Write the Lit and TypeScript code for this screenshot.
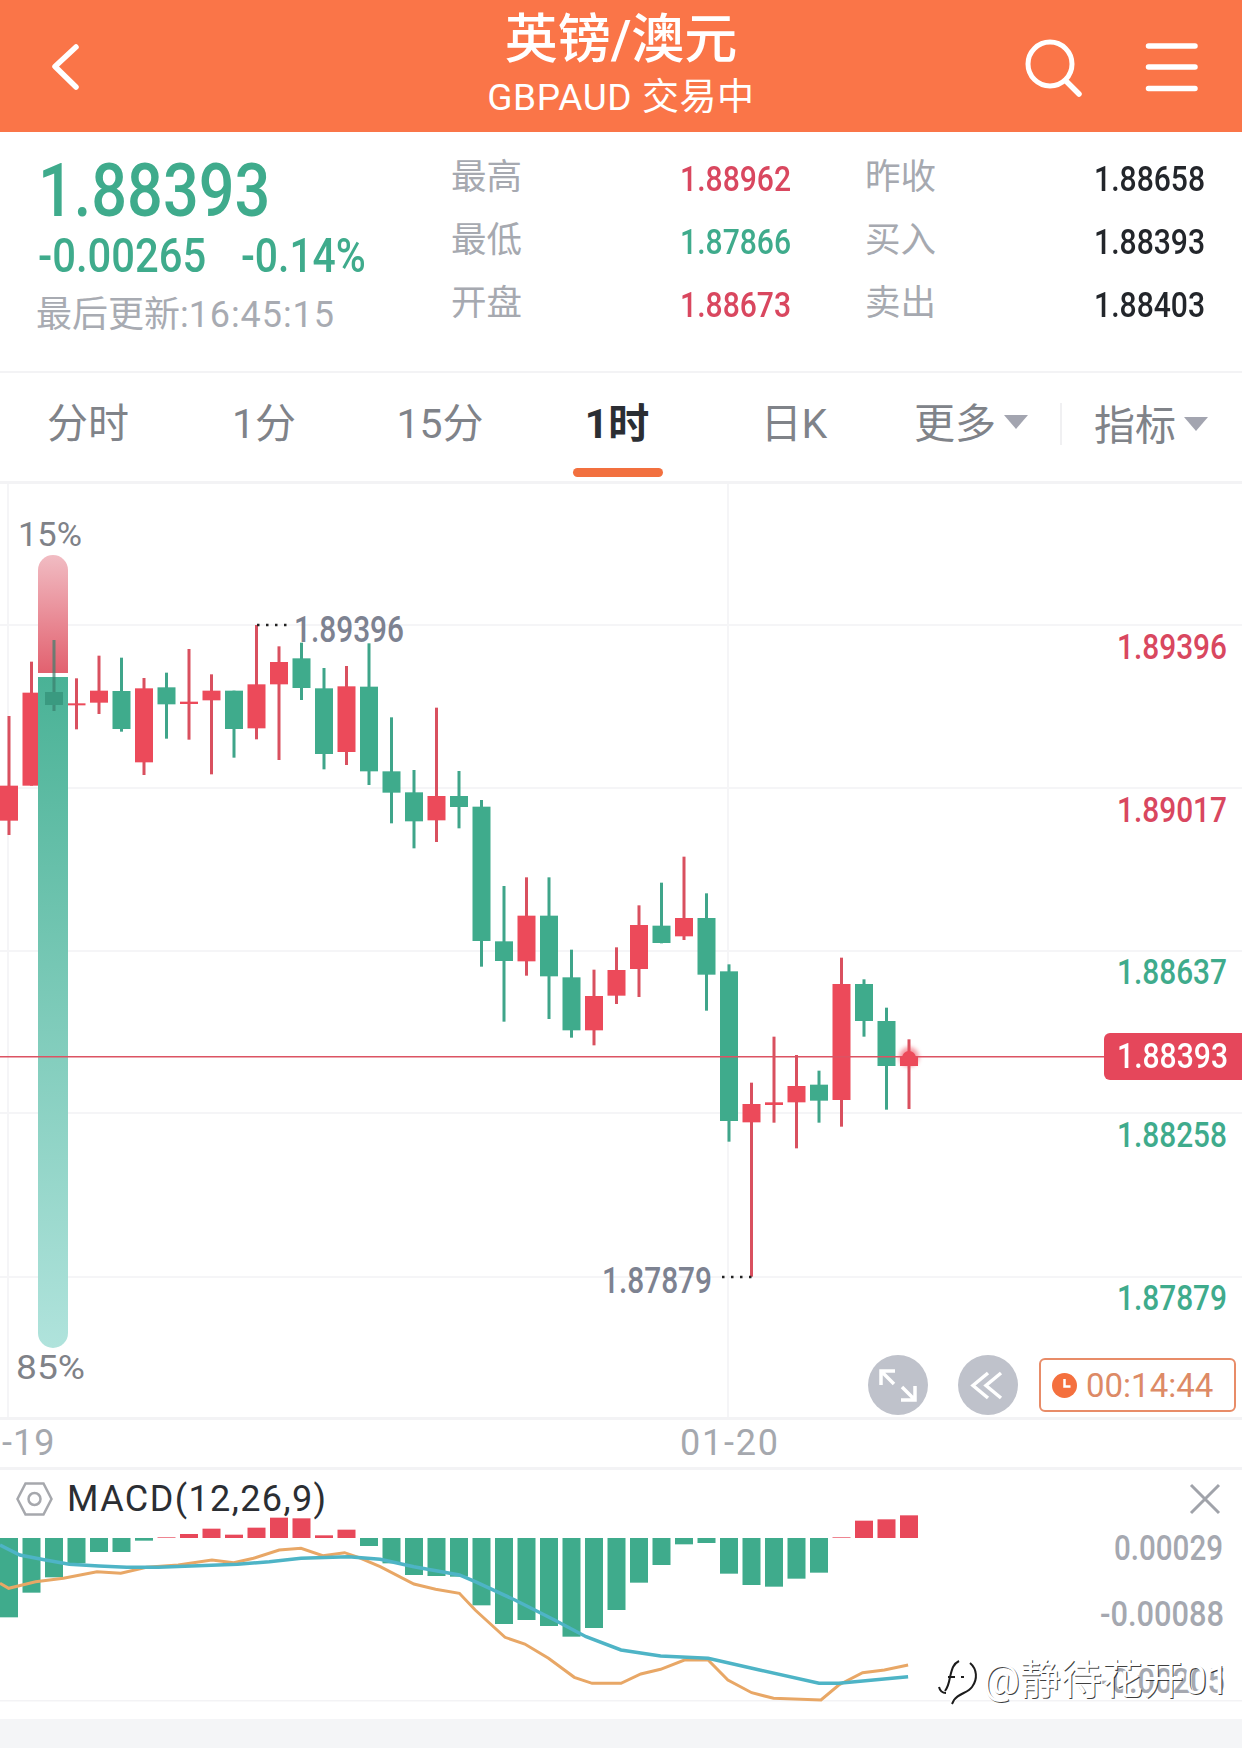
import { LitElement, html, svg, css } from "lit";
import { customElement } from "lit/decorators.js";

const G = "#3fab8c";
const R = "#ec4a5a";
const RW = "#d9505f";
const GW = "#3fa58a";

// [wickTop, wickBottom, bodyTop, bodyBottom, up] — y in 3x crop units
type C = [number, number, number, number, number];
const A: C[] = [
  [648, 1005, 857, 962, 1], [485, 857, 578, 857, 1], [422, 635, 577, 615, 0], [535, 688, 610, 616, 1],
  [467, 642, 572, 608, 1], [473, 695, 573, 687, 0], [534, 825, 565, 787, 1], [518, 716, 562, 613, 0],
  [447, 719, 605, 612, 1], [523, 823, 572, 601, 1], [572, 773, 572, 687, 0], [375, 718, 553, 685, 1],
  [439, 780, 486, 553, 1], [428, 600, 475, 564, 0], [504, 808, 565, 762, 0], [498, 795, 559, 756, 1],
  [430, 855, 560, 814, 0], [652, 970, 814, 878, 0], [810, 1045, 877, 964, 0], [623, 1026, 888, 961, 1],
  [813, 985, 888, 921, 0],
];
const B: C[] = [
  [60, 560, 80, 483, 0], [318, 725, 484, 543, 0], [292, 587, 407, 544, 1], [292, 717, 407, 589, 0],
  [509, 773, 592, 751, 0], [569, 796, 648, 751, 1], [502, 672, 570, 647, 1], [376, 651, 435, 567, 1],
  [308, 490, 437, 489, 0], [230, 480, 414, 469, 1], [340, 692, 414, 584, 0], [553, 1085, 574, 1023, 0],
  [908, 1490, 972, 1027, 1], [770, 1028, 967, 975, 1], [825, 1105, 918, 967, 1], [872, 1028, 914, 962, 0],
  [533, 1040, 612, 960, 1], [598, 770, 612, 723, 0], [683, 989, 723, 858, 0], [778, 987, 830, 858, 1],
];
const candles = [
  ...A.map((c) => c.slice(0, 4).map((v) => 500 + v / 3).concat(c[4])),
  ...B.map((c) => c.slice(0, 4).map((v) => 780 + v / 3).concat(c[4])),
];
const cx = (i: number) => 9 + i * 22.5;

// histogram ends, y in crop units (baseline 715)
const hist = [952, 878, 832, 790, 756, 756, 722, 712, 702, 686, 704, 683, 653, 655, 706, 689, 738, 790, 825, 828, 830, 916, 972, 960, 978, 1010, 984, 930, 848, 795, 733, 729, 821, 855, 860, 836, 818, 712, 662, 658, 646];

const orangeL = [[0,850],[22,865],[90,845],[160,835],[245,815],[305,820],[370,802],[450,795],[535,780],[590,788],[640,775],[705,750],[760,745],[815,767],[870,758],[905,772],[960,800],[1045,852],[1100,868],[1160,880],[1200,930],[1275,1012],[1325,1032],[1385,1075],[1450,1132],[1495,1150],[1568,1150]];
const orangeR = [[50,1122],[100,1108],[160,1080],[220,1080],[270,1140],[330,1178],[385,1195],[505,1200],[550,1155],[610,1118],[665,1110],[725,1095]];
const blueL = [[0,735],[50,765],[115,780],[175,793],[250,798],[320,802],[400,802],[500,797],[600,793],[680,785],[760,775],[880,770],[960,778],[1045,800],[1160,825],[1200,845],[1300,900],[1400,960],[1480,1010],[1568,1050]];
const blueR = [[100,1068],[220,1075],[350,1110],[500,1150],[550,1150],[725,1130]];
const toPts = (l: number[][], r: number[][]) =>
  [...l.map(([x, y]) => [x / 2.525, 1300 + y / 3]), ...r.map(([x, y]) => [621 + x / 2.525, 1300 + y / 3])]
    .map(([x, y]) => `${x.toFixed(1)},${y.toFixed(1)}`)
    .join(" ");

@customElement("app-root")
export class AppRoot extends LitElement {
  static styles = css`
    :host {
      display: block;
      width: 1242px;
      height: 1748px;
      background: #fff;
      overflow: hidden;
      font-family: Roboto, "Noto Sans CJK SC", sans-serif;
    }
    .header {
      height: 132px;
      background: #fa7548;
      color: #fff;
      display: flex;
      align-items: stretch;
    }
    .header svg { display: block; }
    .h-left, .h-right { width: 300px; flex: none; }
    .h-title {
      flex: 1;
      display: flex;
      flex-direction: column;
      align-items: center;
      padding-top: 9px;
    }
    .t1 { font-size: 53px; line-height: 62px; font-weight: 500; white-space: nowrap; }
    .t2 { font-size: 37px; line-height: 42px; margin-top: 6px; letter-spacing: 0.6px; white-space: nowrap; }
    .quote {
      height: 241px;
      box-sizing: border-box;
      display: flex;
      border-bottom: 2px solid #f3f3f5;
    }
    .q-left { width: 451px; flex: none; padding: 25px 0 0 38px; box-sizing: border-box; }
    .price {
      font-size: 75px;
      line-height: 66px;
      height: 66px;
      font-weight: 500;
      color: #3fab8c;
      transform: scaleX(0.84);
      transform-origin: left;
    }
    .chg { display: flex; color: #3fab8c; font-size: 48px; line-height: 66px; font-weight: 500; height: 66px; }
    .chg span { display: block; flex: none; transform: scaleX(0.87); transform-origin: left; }
    .chg span:first-child { width: 203px; }
    .chg span:last-child { transform: scaleX(0.85); }
    .upd { font-size: 36px; line-height: 50px; color: #a8abb2; white-space: nowrap; margin: 1px 0 0 -2px; }
    .upd b { font-weight: 400; letter-spacing: 0.9px; }
    .q-grid {
      flex: none;
      padding-top: 15px;
      display: grid;
      grid-template-columns: 100px 240px 175px 276px;
      grid-auto-rows: 63px;
      align-items: center;
    }
    .lab { font-size: 35.5px; line-height: 40px; color: #a6a9b0; padding-bottom: 4px; white-space: nowrap; }
    .lab.second { margin-left: 74px; }
    .val { font-size: 35px; line-height: 40px; text-align: right; font-weight: 500; padding-top: 3px; }
    .val span { display: inline-block; transform: scaleX(0.86); transform-origin: right; }
    .val.last { padding-right: 37px; color: #23262b; }
    .red { color: #d9475f; }
    .green { color: #3fab8c; }
    .tabs {
      height: 111px;
      box-sizing: border-box;
      display: flex;
      border-bottom: 3px solid #f3f3f5;
    }
    .tab {
      position: relative;
      display: flex;
      align-items: center;
      justify-content: center;
      font-size: 41px;
      color: #808389;
      padding-bottom: 15px;
      box-sizing: border-box;
      white-space: nowrap;
      flex: none;
    }
    .tab.w176 { width: 176px; }
    .tab.w178 { width: 178px; }
    .tab.w182 { width: 182px; padding-bottom: 10px; }
    .tab.on { color: #2b2e33; font-weight: 700; }
    .tab.on::after {
      content: "";
      position: absolute;
      left: 45px;
      bottom: 4px;
      width: 90px;
      height: 9px;
      border-radius: 5px;
      background: #f2703f;
    }
    .caret {
      width: 0; height: 0;
      border-left: 12px solid transparent;
      border-right: 12px solid transparent;
      border-top: 14px solid #a3a5b0;
      margin-left: 8px;
      margin-top: 4px;
    }
    .sep { width: 2px; height: 42px; background: #f0f0f2; align-self: center; margin-top: -6px; margin-right: -2px; }
    .chart { position: relative; height: 936px; box-sizing: border-box; border-bottom: 3px solid #f3f3f5; }
    .chart svg, .macd svg { display: block; }
    .svg-t { font-family: Roboto, sans-serif; }
    .axis-lab { font-size: 34.5px; font-weight: 500; }
    .tag {
      position: absolute;
      right: 0;
      top: 549px;
      width: 138px;
      height: 47px;
      background: #e5475b;
      color: #fff;
      font-size: 35px;
      line-height: 47px;
      text-align: center;
      font-weight: 500;
      border-radius: 6px 0 0 6px;
    }
    .tag span { display: inline-block; transform: scaleX(0.86); }
    .ctrls {
      position: absolute;
      left: 868px;
      top: 871px;
      display: flex;
      align-items: center;
    }
    .round {
      width: 60px;
      height: 60px;
      border-radius: 50%;
      background: #bfc2cb;
      margin-right: 30px;
      flex: none;
    }
    .round + .round { margin-right: 21px; }
    .timer {
      width: 197px;
      height: 54px;
      box-sizing: border-box;
      border: 2px solid #e88c68;
      border-radius: 6px;
      display: flex;
      align-items: center;
      padding-left: 11px;
      gap: 9px;
      font-size: 33px;
      color: #dd8a66;
      flex: none;
    }
    .axis {
      height: 50px;
      box-sizing: border-box;
      border-bottom: 3px solid #f3f3f5;
      color: #a5a8ae;
      font-size: 36px;
      line-height: 46px;
      display: flex;
    }
    .axis .a1 { width: 680px; padding-left: 2px; box-sizing: border-box; letter-spacing: 1px; }
    .axis .a2 { letter-spacing: 1.8px; }
    .macd { position: relative; height: 249px; }
    .macd-title {
      position: absolute;
      left: 16px;
      top: 9px;
      display: flex;
      align-items: center;
      gap: 14px;
      font-size: 36px;
      line-height: 40px;
      letter-spacing: 1.4px;
      color: #2b2e33;
    }
    .foot { height: 29px; background: #f4f5f7; }
    .wm {
      position: absolute;
      left: 983px;
      top: 1652px;
      font-size: 41px;
      line-height: 56px;
      color: #fff;
      white-space: nowrap;
      text-shadow: 1px 1px 0 rgba(0, 0, 0, 0.75);
    }
    .wm-logo { position: absolute; left: 937px; top: 1655px; }
    .page { position: relative; }
  `;

  render() {
    const gridY = [625, 788, 951, 1113, 1277];
    const prices: [string, number, string][] = [
      ["1.89396", 647, "#d9475f"],
      ["1.89017", 810, "#d9475f"],
      ["1.88637", 972, "#3fab8c"],
      ["1.88258", 1135, "#3fab8c"],
      ["1.87879", 1298, "#3fab8c"],
    ];
    return html`
      <div class="page">
        <div class="header">
          <div class="h-left">
            <svg width="300" height="132"><path d="M76 47 L55 66.5 L76 87" fill="none" stroke="#fff" stroke-width="5.5" stroke-linecap="round" stroke-linejoin="round"/></svg>
          </div>
          <div class="h-title">
            <div class="t1">英镑/澳元</div>
            <div class="t2">GBPAUD 交易中</div>
          </div>
          <div class="h-right">
            <svg width="300" height="132" viewBox="942 0 300 132">
              <circle cx="1050" cy="64" r="22" fill="none" stroke="#fff" stroke-width="5"/>
              <path d="M1066 81 L1079 94" stroke="#fff" stroke-width="5.5" stroke-linecap="round"/>
              <path d="M1148.5 46 H1195 M1148.5 67 H1195 M1148.5 88.5 H1195" stroke="#fff" stroke-width="5.5" stroke-linecap="round"/>
            </svg>
          </div>
        </div>

        <div class="quote">
          <div class="q-left">
            <div class="price">1.88393</div>
            <div class="chg"><span>-0.00265</span><span>-0.14%</span></div>
            <div class="upd">最后更新:<b>16:45:15</b></div>
          </div>
          <div class="q-grid">
            <div class="lab">最高</div><div class="val red"><span>1.88962</span></div>
            <div class="lab second">昨收</div><div class="val last"><span>1.88658</span></div>
            <div class="lab">最低</div><div class="val green"><span>1.87866</span></div>
            <div class="lab second">买入</div><div class="val last"><span>1.88393</span></div>
            <div class="lab">开盘</div><div class="val red"><span>1.88673</span></div>
            <div class="lab second">卖出</div><div class="val last"><span>1.88403</span></div>
          </div>
        </div>

        <div class="tabs">
          <div class="tab w176">分时</div>
          <div class="tab w176">1分</div>
          <div class="tab w176">15分</div>
          <div class="tab w178 on">1时</div>
          <div class="tab w176">日K</div>
          <div class="tab w178">更多<span class="caret"></span></div>
          <div class="sep"></div>
          <div class="tab w182">指标<span class="caret"></span></div>
        </div>

        <div class="chart">
          <svg width="1242" height="933" viewBox="0 484 1242 933">
            <defs>
              <linearGradient id="gr" x1="0" y1="0" x2="0" y2="1"><stop offset="0" stop-color="#f1bcc3"/><stop offset="1" stop-color="#e2616f"/></linearGradient>
              <linearGradient id="gg" x1="0" y1="0" x2="0" y2="1"><stop offset="0" stop-color="#4ab296"/><stop offset="1" stop-color="#b0e3dc"/></linearGradient>
              <filter id="glow" x="-60%" y="-60%" width="220%" height="220%"><feGaussianBlur stdDeviation="2"/></filter>
            </defs>
            ${gridY.map((y) => svg`<rect x="0" y="${y - 1}" width="1242" height="2" fill="#f5f5f7"/>`)}
            <rect x="7" y="484" width="2" height="933" fill="#f5f5f7"/>
            <rect x="727" y="484" width="2" height="933" fill="#f5f5f7"/>
            ${candles.map((c, i) => {
              const x = cx(i);
              const up = c[4] === 1;
              if (i === 2) return svg``;
              return svg`
                <rect x="${x - 1.5}" y="${c[0]}" width="3" height="${c[1] - c[0]}" fill="${up ? RW : GW}"/>
                <rect x="${x - 9}" y="${c[2]}" width="18" height="${Math.max(c[3] - c[2], 2)}" fill="${up ? R : G}"/>`;
            })}
            <path d="M38 673 V570 a15 15 0 0 1 30 0 V673 Z" fill="url(#gr)"/>
            <path d="M38 677 H68 V1333 a15 15 0 0 1 -30 0 Z" fill="url(#gg)"/>
            <rect x="52.5" y="640" width="3" height="71" fill="#3a7f6c" opacity="0.7"/>
            <rect x="45" y="692" width="18" height="13" fill="#3a9a80"/>
            <text class="svg-t" x="18" y="546" font-size="33" fill="#7f8288" textLength="64" lengthAdjust="spacingAndGlyphs">15%</text>
            <text class="svg-t" x="16" y="1379" font-size="33" fill="#7f8288" textLength="69" lengthAdjust="spacingAndGlyphs">85%</text>
            <path d="M257 625 H287" stroke="#222" stroke-width="2.5" stroke-dasharray="2.5 6.5"/>
            <text class="svg-t" x="294" y="642" font-size="36" font-weight="500" fill="#7d8291" textLength="110" lengthAdjust="spacingAndGlyphs">1.89396</text>
            <path d="M722 1277 H752" stroke="#222" stroke-width="2.5" stroke-dasharray="2.5 6.5"/>
            <text class="svg-t" x="602" y="1293" font-size="36" font-weight="500" fill="#7d8291" textLength="110" lengthAdjust="spacingAndGlyphs">1.87879</text>
            <rect x="0" y="1056" width="1104" height="1.5" fill="#dc5363"/>
            <circle cx="909" cy="1057" r="10" fill="#ec4a5a" opacity="0.55" filter="url(#glow)"/>
            <circle cx="909" cy="1058" r="7" fill="#ec4a5a"/>
            ${prices.map(([t, y, c]) => svg`<text class="svg-t axis-lab" x="1117" y="${y + 12}" fill="${c}" textLength="110" lengthAdjust="spacingAndGlyphs">${t}</text>`)}
          </svg>
          <div class="tag"><span>1.88393</span></div>
          <div class="ctrls">
            <div class="round">
              <svg width="60" height="60" viewBox="868 1355 60 60"><path d="M881 1385 V1371 H895 M882 1372 L894 1384 M915 1386 V1400 H901 M914 1399 L902 1387" fill="none" stroke="#fff" stroke-width="3.5"/></svg>
            </div>
            <div class="round">
              <svg width="60" height="60" viewBox="958 1355 60 60"><path d="M988 1373 L973 1385.5 L988 1398 M1001 1373 L986 1385.5 L1001 1398" fill="none" stroke="#fff" stroke-width="3.5"/></svg>
            </div>
            <div class="timer">
              <svg width="25" height="25" viewBox="0 0 25 25"><circle cx="12.5" cy="12.5" r="12.5" fill="#f4703e"/><path d="M12.5 6 V13.5 H18.5" fill="none" stroke="#fff" stroke-width="2.5"/></svg>
              <span>00:14:44</span>
            </div>
          </div>
        </div>

        <div class="axis"><div class="a1">-19</div><div class="a2">01-20</div></div>

        <div class="macd">
          <svg width="1242" height="249" viewBox="0 1470 1242 249">
            <rect x="0" y="1700" width="1242" height="1.5" fill="#f3f3f5"/>
            ${hist.map((e, i) => {
              const y = 1300 + e / 3;
              const base = 1538;
              const up = y < base;
              return svg`<rect x="${cx(i) - 9}" y="${up ? y : base}" width="18" height="${up ? base - y : y - base}" fill="${up ? "#e8485a" : "#3fab8c"}"/>`;
            })}
            <polyline points="${toPts(orangeL, orangeR)}" fill="none" stroke="#e8a766" stroke-width="3"/>
            <polyline points="${toPts(blueL, blueR)}" fill="none" stroke="#4eb4c6" stroke-width="3.5"/>
            <path d="M1191 1485 L1219 1513 M1219 1485 L1191 1513" stroke="#a0a3aa" stroke-width="3"/>
            <text class="svg-t axis-lab" x="1114" y="1560" fill="#a5a8b0" textLength="109" lengthAdjust="spacingAndGlyphs">0.00029</text>
            <text class="svg-t axis-lab" x="1100" y="1626" fill="#a5a8b0" textLength="124" lengthAdjust="spacingAndGlyphs">-0.00088</text>
            <text class="svg-t axis-lab" x="1101" y="1693" fill="#a5a8b0" textLength="124" lengthAdjust="spacingAndGlyphs">-0.00205</text>
          </svg>
          <div class="macd-title">
            <svg width="37" height="34" viewBox="0 0 37 34"><path d="M9.5 1.5 H27.5 L35.5 17 L27.5 32.5 H9.5 L1.5 17 Z" fill="none" stroke="#a6a8ad" stroke-width="2.5"/><circle cx="18.5" cy="17" r="6" fill="none" stroke="#a6a8ad" stroke-width="2.5"/></svg>
            <span>MACD(12,26,9)</span>
          </div>
        </div>
        <div class="foot"></div>

        <svg class="wm-logo" width="44" height="52" viewBox="0 0 44 52">
          <path d="M2 29 C-1 12 14 1 26 4 C36 6 42 16 38 28 C35 38 28 40 20 44 L16 50" fill="#fff" stroke="none"/>
          <path d="M22 6 C16 9 15 14 13 22 C12 28 11 32 8 36 M11 22 H18 M24 22 H27 M33 8 C40 14 41 24 35 32 C31 38 22 38 17 45 L15 49 M2 32 C3 36 6 38 9 38" fill="none" stroke="#1c1c1c" stroke-width="2"/>
        </svg>
        <div class="wm">@静待花开01</div>
      </div>
    `;
  }
}
